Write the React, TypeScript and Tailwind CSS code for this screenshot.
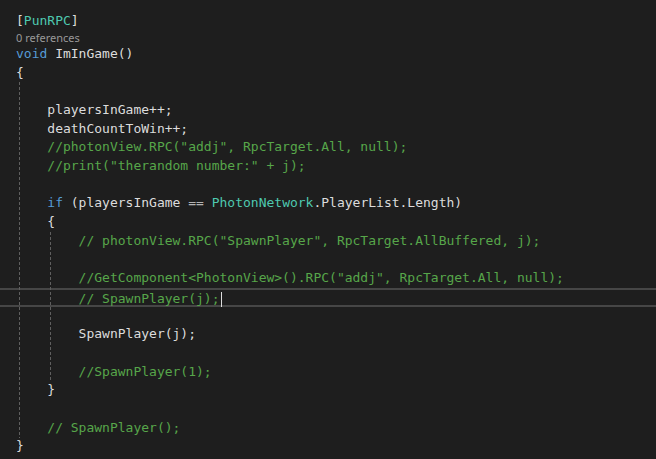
import React from "react";

type Tok = [string, "t" | "k" | "y" | "c" | "o"];

const color: Record<string, string> = {
  t: "text-[#dcdcdc]",
  k: "text-[#569cd6]",
  y: "text-[#4ec9b0]",
  c: "text-[#57a64a]",
  o: "text-[#b4b4b4]",
};

// code lines after the CodeLens
const lines: Tok[][] = [
  [["void", "k"], [" ImInGame()", "t"]],
  [["{", "t"]],
  [],
  [["    playersInGame++;", "t"]],
  [["    deathCountToWin++;", "t"]],
  [["    //photonView.RPC(\"addj\", RpcTarget.All, null);", "c"]],
  [["    //print(\"therandom number:\" + j);", "c"]],
  [],
  [
    ["    ", "t"],
    ["if", "k"],
    [" (playersInGame ", "t"],
    ["==", "o"],
    [" ", "t"],
    ["PhotonNetwork", "y"],
    [".PlayerList.Length)", "t"],
  ],
  [["    {", "t"]],
  [["        // photonView.RPC(\"SpawnPlayer\", RpcTarget.AllBuffered, j);", "c"]],
  [],
  [["        //GetComponent<PhotonView>().RPC(\"addj\", RpcTarget.All, null);", "c"]],
  [["        // SpawnPlayer(j);", "c"]],
  [],
  [["        SpawnPlayer(j);", "t"]],
  [],
  [["        //SpawnPlayer(1);", "c"]],
  [["    }", "t"]],
  [],
  [["    // SpawnPlayer();", "c"]],
  [["}", "t"]],
];

const CURRENT = 13;

const Guide = ({ className }: { className: string }) => (
  <div
    className={
      "absolute w-px bg-[repeating-linear-gradient(to_bottom,#5f5f5f_0_3px,transparent_3px_5px)] " +
      className
    }
  />
);

export default function App() {
  return (
    <div className="relative w-[656px] h-[459px] overflow-hidden bg-[#1e1e1e] pt-[12px] font-['DejaVu_Sans_Mono',monospace] text-[13px]">
      <div className="pl-[16px] h-[18.7px] leading-[18.7px] whitespace-pre">
        <span className="text-[#dcdcdc]">[</span>
        <span className="text-[#4ec9b0]">PunRPC</span>
        <span className="text-[#dcdcdc]">]</span>
      </div>
      <div className="pl-[16px] h-[14.3px] leading-[14.3px] font-['Noto_Sans',sans-serif] text-[11px] text-[#999999]">
        0 references
      </div>
      <div className="relative">
        {lines.map((ln, i) => (
          <div
            key={i}
            className={
              "pl-[16px] h-[18.7px] leading-[18.7px] whitespace-pre box-border " +
              (i === CURRENT ? "border-y-2 border-[#464646] leading-[14.7px] relative" : "")
            }
          >
            {ln.map(([s, c], j) => (
              <span key={j} className={color[c]}>
                {s}
              </span>
            ))}
            {i === CURRENT && (
              <span className="inline-block w-px h-[15px] align-middle bg-[#dcdcdc] ml-[1px]" />
            )}
          </div>
        ))}
        <Guide className="left-[19px] top-[37.4px] h-[355.3px]" />
        <Guide className="left-[50px] top-[187px] h-[149.6px]" />
      </div>
    </div>
  );
}
